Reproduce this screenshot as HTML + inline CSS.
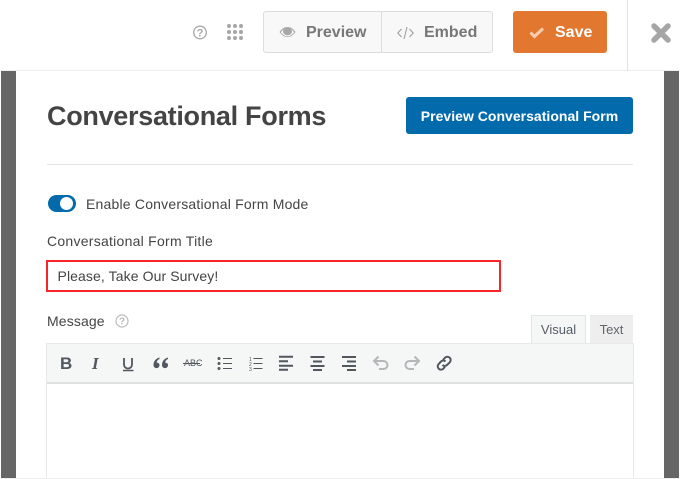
<!DOCTYPE html>
<html>
<head>
<meta charset="utf-8">
<style>
html,body{margin:0;padding:0;width:680px;height:479px;overflow:hidden;background:#fff;font-family:"Liberation Sans",sans-serif;}
.a{position:absolute;white-space:nowrap;}
svg{position:absolute;overflow:visible;}
</style>
</head>
<body>
<!-- backdrop -->
<div class="a" style="left:1px;top:71px;width:15px;height:407px;background:#666;"></div>
<div class="a" style="left:664px;top:71px;width:15px;height:407px;background:#666;"></div>
<!-- top bar -->
<div class="a" style="left:0;top:70px;width:680px;height:1px;background:#eee;"></div>
<div class="a" style="left:627px;top:0;width:1px;height:71px;background:#e2e2e2;"></div>

<svg style="left:193px;top:25px" width="15" height="15" viewBox="0 0 15 15"><circle cx="7" cy="7.500" r="6.300" fill="none" stroke="#a8a8a8" stroke-width="1.300"/><text x="7" y="11.500" font-size="11" font-weight="700" text-anchor="middle" fill="#a8a8a8" font-family="Liberation Sans">?</text></svg>
<svg style="left:227px;top:24px" width="17" height="16" fill="#a6a6a6"><circle cx="2" cy="2" r="2"/><circle cx="8" cy="2" r="2"/><circle cx="14" cy="2" r="2"/><circle cx="2" cy="8" r="2"/><circle cx="8" cy="8" r="2"/><circle cx="14" cy="8" r="2"/><circle cx="2" cy="14" r="2"/><circle cx="8" cy="14" r="2"/><circle cx="14" cy="14" r="2"/></svg>

<div class="a" style="left:263px;top:11px;width:228px;height:40px;border:1px solid #ddd;border-radius:3px;background:#f8f8f8;"></div>
<div class="a" style="left:381px;top:12px;width:1px;height:40px;background:#ddd;"></div>
<svg style="left:279px;top:26px" width="17" height="13" viewBox="0 0 17 13"><path d="M0.500 6C3 2.500 5.500 1 8.500 1s5.500 1.500 8 5c-2.500 3.500-5 5-8 5S3 9.500 0.500 6z" fill="#a8a8a8"/><path d="M1.800 6.200C4 3.300 6 2.200 8.500 2.200s4.500 1.100 6.700 4c-2.200 2.900-4.200 4-6.700 4S4 9.100 1.800 6.200z" fill="#f8f8f8"/><ellipse cx="8.500" cy="5.500" rx="4.500" ry="3.800" fill="#a8a8a8"/></svg>
<div class="a" style="left:306px;top:24px;font-size:16px;font-weight:700;color:#777;line-height:18px;">Preview</div>
<svg style="left:397px;top:26px" width="17" height="14" fill="none" stroke="#999" stroke-width="1"><path d="M4.500 3L0.800 7l3.700 4M12.500 3l3.700 4-3.700 4M10 1L7 13"/></svg>
<div class="a" style="left:424px;top:24px;font-size:16px;font-weight:700;color:#777;line-height:18px;">Embed</div>

<div class="a" style="left:513px;top:11px;width:94px;height:42px;border-radius:3px;background:#e27730;"></div>
<svg style="left:529px;top:26px" width="16" height="13"><path d="M1.500 6.500l4 4 8.500-8" fill="none" stroke="#f8cdb2" stroke-width="3"/></svg>
<div class="a" style="left:555px;top:24px;font-size:16px;font-weight:700;color:#fff;line-height:18px;">Save</div>
<svg style="left:651px;top:23px" width="20" height="20"><path d="M3 3L17 17M17 3L3 17" stroke="#a6a6a6" stroke-width="5.500" stroke-linecap="round" fill="none"/></svg>

<!-- header -->
<div class="a" style="left:47px;top:100px;font-size:27px;font-weight:700;color:#444;line-height:32px;letter-spacing:-.3px;">Conversational Forms</div>
<div class="a" style="left:406px;top:97px;width:227px;height:37px;border-radius:3px;background:#036aab;color:#fff;font-size:14px;font-weight:700;line-height:38px;text-align:center;letter-spacing:.02px;">Preview Conversational Form</div>
<div class="a" style="left:47px;top:164px;width:586px;height:1px;background:#e4e4e4;"></div>

<!-- toggle -->
<div class="a" style="left:48px;top:195px;width:28px;height:17px;border-radius:9px;background:#036aab;"></div>
<div class="a" style="left:60px;top:197px;width:13px;height:13px;border-radius:50%;background:#fff;"></div>
<div class="a" style="left:86px;top:196px;font-size:14px;color:#444;line-height:17px;letter-spacing:.2px;">Enable Conversational Form Mode</div>

<div class="a" style="left:47px;top:233px;font-size:14px;color:#444;line-height:17px;letter-spacing:.26px;">Conversational Form Title</div>
<div class="a" style="left:46px;top:260px;width:451px;height:28px;border:2px solid #f6262a;background:#fff;"></div>
<div class="a" style="left:57.500px;top:267.500px;font-size:14px;color:#444;line-height:17px;letter-spacing:.1px;">Please, Take Our Survey!</div>

<div class="a" style="left:47px;top:313px;font-size:14px;color:#444;line-height:17px;letter-spacing:.13px;">Message</div>
<svg style="left:115px;top:314px" width="14" height="14" viewBox="0 0 14 14"><circle cx="7" cy="7" r="6" fill="none" stroke="#bbb" stroke-width="1.200"/><text x="7" y="10.500" font-size="10" font-weight="700" text-anchor="middle" fill="#bbb" font-family="Liberation Sans">?</text></svg>

<!-- tabs -->
<div class="a" style="left:531px;top:315px;width:53px;height:29px;border:1px solid #e2e4e7;border-bottom:0;background:#f5f6f6;color:#555d66;font-size:13px;line-height:27px;text-align:center;">Visual</div>
<div class="a" style="left:590px;top:315px;width:43px;height:28px;border-top:1px solid #e8e8e8;background:#eee;color:#60666d;font-size:13px;line-height:27px;text-align:center;">Text</div>

<!-- editor -->
<div class="a" style="left:46px;top:343px;width:586px;height:135px;border:1px solid #e8e9ea;border-bottom:0;background:#fff;"></div>
<div class="a" style="left:47px;top:344px;width:586px;height:38px;background:#f5f6f6;border-bottom:2px solid #e0e1e2;"></div>
<div class="a" style="left:0;top:478px;width:680px;height:1px;background:#efefef;"></div>

<div class="a" style="left:60px;top:354px;font-size:17px;font-weight:700;color:#50575e;line-height:20px;">B</div>
<div class="a" style="left:92px;top:354px;font-size:17px;font-weight:700;font-style:italic;color:#50575e;line-height:20px;font-family:'Liberation Serif',serif;">I</div>
<svg style="left:122px;top:357px" width="13" height="15" fill="none" stroke="#50575e"><path d="M2 1v6.500a4 4 0 0 0 8 0V1" stroke-width="1.800"/><path d="M1 13.500h10.500" stroke-width="1.500"/></svg>
<svg style="left:153px;top:357px" width="16" height="13" fill="#50575e"><path d="M6.500 0.500C3 1.500 0.500 4 0.500 8a3 3 0 1 0 5.500-1.500C5 5.500 4 5.500 3.500 5.700 4 3.700 5 2.500 6.500 2zM15 0.500c-3.500 1-6 3.500-6 7.500a3 3 0 1 0 5.500-1.500c-1-1-2-1-2.500-.8.500-2 1.500-3.200 3-3.700z"/></svg>
<div class="a" style="left:184px;top:357px;font-size:9px;color:#50575e;line-height:12px;">ABC</div>
<div class="a" style="left:183px;top:362.500px;width:17px;height:1px;background:#50575e;"></div>
<svg style="left:217px;top:356px" width="15" height="15" fill="#50575e"><circle cx="2" cy="2.500" r="1.500"/><circle cx="2" cy="7.500" r="1.500"/><circle cx="2" cy="12.500" r="1.500"/><path d="M6 2h9v1H6zM6 7h9v1H6zM6 12h9v1H6z"/></svg>
<svg style="left:249px;top:356px" width="14" height="15" fill="#50575e"><text x="0" y="5" font-size="5" font-family="Liberation Sans">1</text><text x="0" y="10" font-size="5" font-family="Liberation Sans">2</text><text x="0" y="15" font-size="5" font-family="Liberation Sans">3</text><path d="M4.500 2h9v1h-9zM4.500 7h9v1h-9zM4.500 12h9v1h-9z"/></svg>
<svg style="left:279px;top:356px" width="15" height="15" fill="#50575e"><path d="M0 0h14v2H0zM0 4.500h9v2H0zM0 9h14v2H0zM0 13h9v2H0z" transform="translate(0,-.2)"/></svg>
<svg style="left:310px;top:356px" width="15" height="15" fill="#50575e"><path d="M0.500 0h14v2H.5zM3 4.500h9v2H3zM.5 9h14v2H.5zM3 13h9v2H3z"/></svg>
<svg style="left:342px;top:356px" width="15" height="15" fill="#50575e"><path d="M0 0h14v2H0zM5 4.500h9v2H5zM0 9h14v2H0zM5 13h9v2H5z"/></svg>
<svg style="left:372px;top:355px" width="17" height="16" fill="none" stroke="#b4b8ba" stroke-width="2"><path d="M2 6h9.500a4 4 0 0 1 0 8H7"/><path d="M6.500 1.500L2 6l4.500 4.500"/></svg>
<svg style="left:404px;top:355px" width="17" height="16" fill="none" stroke="#b4b8ba" stroke-width="2"><path d="M15 6H5.500a4 4 0 0 0 0 8H10"/><path d="M10.500 1.500L15 6l-4.500 4.500"/></svg>
<svg style="left:435px;top:354px" width="19" height="19" fill="none" stroke="#50575e" stroke-width="2"><path d="M8 6l2-2.300a3.300 3.300 0 0 1 4.700 4.700L12 11a3.300 3.300 0 0 1-4.500 0"/><path d="M10.500 7.500a3.300 3.300 0 0 0-4.500 0L3.300 10.500A3.300 3.300 0 0 0 8 15l2-2.200"/></svg>
</body>
</html>
